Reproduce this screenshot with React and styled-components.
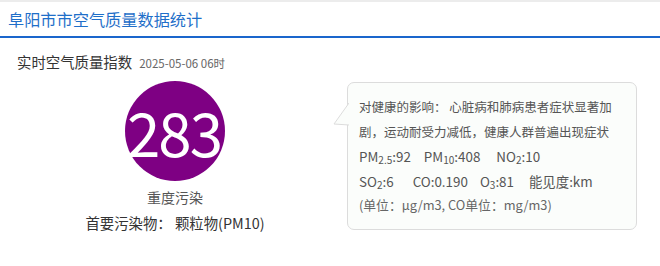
import React from "react";
import styled, { createGlobalStyle } from "styled-components";

const GlobalStyle = createGlobalStyle`
  html, body {
    margin: 0;
    padding: 0;
    background: #fff;
  }
  body {
    font-family: "Noto Sans CJK SC", "Liberation Sans", sans-serif;
    color: #333;
  }
`;

const Page = styled.div`
  width: 660px;
  height: 266px;
  overflow: hidden;
  background: #fff;
  border-top: 2px solid #ececec;
  box-sizing: border-box;
`;

const Header = styled.div`
  height: 34px;
  display: flex;
  align-items: center;
  padding-left: 8px;
  border-bottom: 2px solid #1a66cc;
`;

const Title = styled.h1`
  margin: 0;
  font-size: 16.2px;
  font-weight: normal;
  color: #1f6fc9;
  line-height: 20px;
`;

const SubRow = styled.div`
  display: flex;
  align-items: baseline;
  gap: 7px;
  padding: 14px 0 0 17px;
  line-height: 20px;
`;

const SubTitle = styled.span`
  font-size: 14.4px;
  color: #333;
`;

const Stamp = styled.span`
  font-size: 11.5px;
  color: #666;
`;

const Body = styled.div`
  display: flex;
  align-items: flex-start;
  margin-top: 8px;
`;

const Left = styled.div`
  width: 344px;
  padding-left: 3px;
  display: flex;
  flex-direction: column;
  align-items: center;
`;

const Dial = styled.div`
  width: 100px;
  height: 100px;
  border-radius: 50%;
  background: ${(p) => p.$color};
  display: flex;
  align-items: center;
  justify-content: center;
  color: #fff;
  font-size: 60px;
  letter-spacing: -2px;
  line-height: 1;
  padding-right: 2px;
  box-sizing: border-box;
`;

const Level = styled.div`
  margin-top: 6px;
  font-size: 14px;
  color: #555;
  line-height: 20px;
`;

const Primary = styled.div`
  margin-top: 6px;
  font-size: 14.4px;
  color: #333;
  line-height: 20px;
`;

const Bubble = styled.div`
  position: relative;
  margin-top: 1px;
  width: 261px;
  padding: 12px 16px 11px 11px;
  border: 1px solid #dcdcdc;
  border-radius: 7px;
  background: #fbfdfb;
  font-size: 12.5px;
  line-height: 24.5px;
  color: #555;
`;

const Pointer = styled.svg`
  position: absolute;
  left: -15px;
  top: 20px;
`;

const Row = styled.div`
  display: flex;
  white-space: nowrap;
`;

const Item = styled.span`
  margin-right: ${(p) => p.$gap}px;
  font-size: 13.4px;
`;

const Note = styled.div`
  font-size: 12.8px;
  color: #666;
`;

const Sub = styled.sub`
  font-size: 10px;
  vertical-align: -2px;
  line-height: 0;
`;

export default function App() {
  return (
    <>
      <GlobalStyle />
      <Page>
        <Header>
          <Title>阜阳市市空气质量数据统计</Title>
        </Header>
        <SubRow>
          <SubTitle>实时空气质量指数</SubTitle>
          <Stamp>2025-05-06 06时</Stamp>
        </SubRow>
        <Body>
          <Left>
            <Dial $color="#7e0083">283</Dial>
            <Level>重度污染</Level>
            <Primary>首要污染物： 颗粒物(PM10)</Primary>
          </Left>
          <Bubble>
            <Pointer width="16" height="24" viewBox="0 0 16 24">
              <path d="M16 0 L1 21 L16 22" fill="#fbfdfb" stroke="#dcdcdc" strokeWidth="1" />
            </Pointer>
            <div>对健康的影响： 心脏病和肺病患者症状显著加剧，运动耐受力减低，健康人群普遍出现症状</div>
            <Row>
              <Item $gap={13}>PM<Sub>2.5</Sub>:92</Item>
              <Item $gap={16}>PM<Sub>10</Sub>:408</Item>
              <Item $gap={0}>NO<Sub>2</Sub>:10</Item>
            </Row>
            <Row>
              <Item $gap={19}>SO<Sub>2</Sub>:6</Item>
              <Item $gap={12}>CO:0.190</Item>
              <Item $gap={15}>O<Sub>3</Sub>:81</Item>
              <Item $gap={0}>能见度:km</Item>
            </Row>
            <Note>(单位：μg/m3, CO单位：mg/m3)</Note>
          </Bubble>
        </Body>
      </Page>
    </>
  );
}
